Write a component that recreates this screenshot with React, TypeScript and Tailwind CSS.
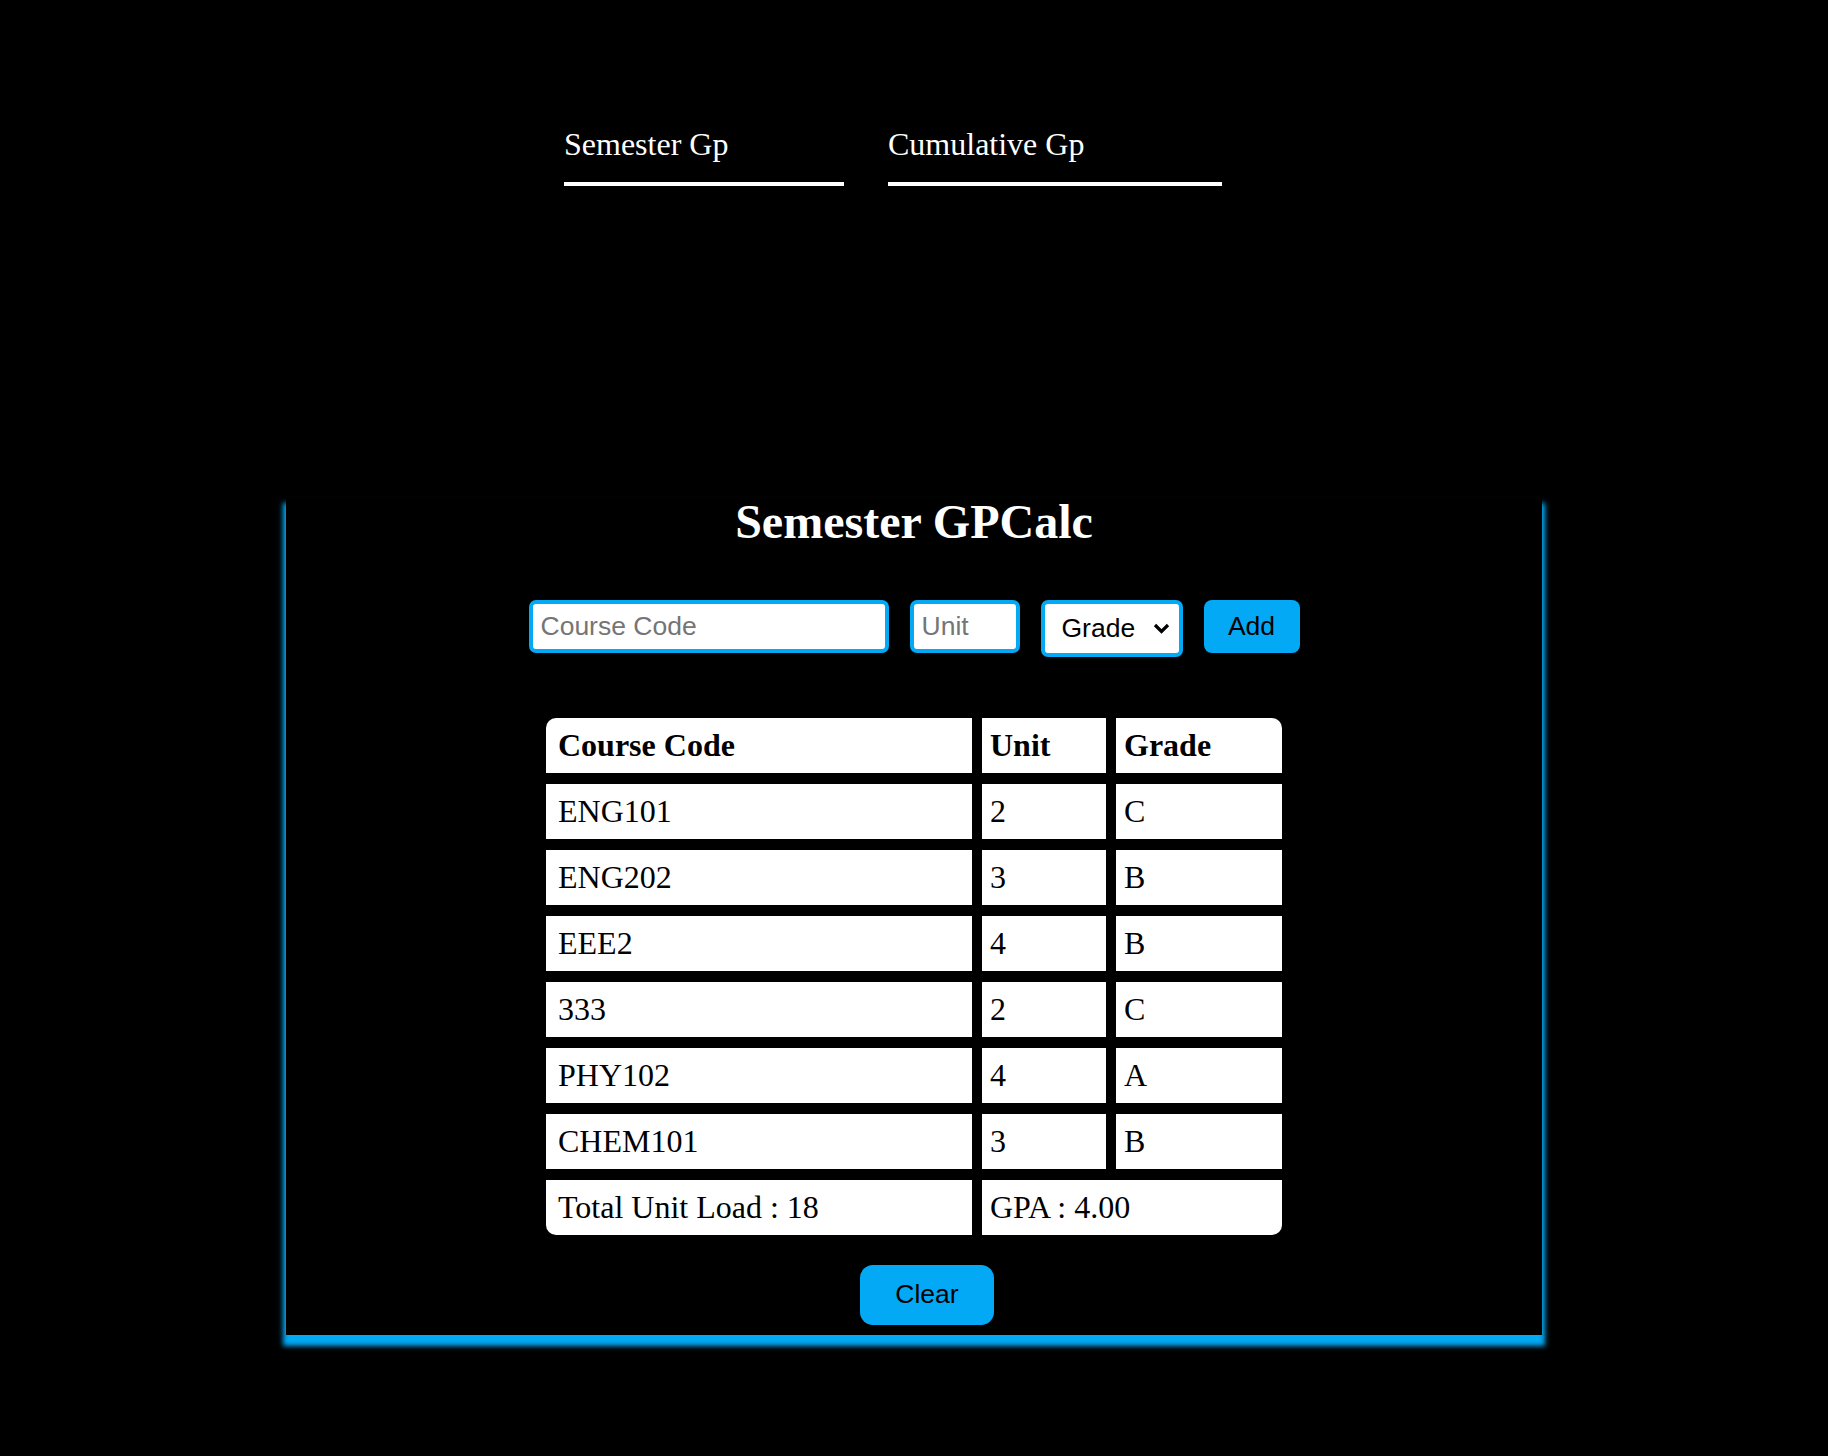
import { useState } from "react";

type Course = { code: string; unit: number; grade: string };

const initialCourses: Course[] = [
    { code: "ENG101", unit: 2, grade: "C" },
    { code: "ENG202", unit: 3, grade: "B" },
    { code: "EEE2", unit: 4, grade: "B" },
    { code: "333", unit: 2, grade: "C" },
    { code: "PHY102", unit: 4, grade: "A" },
    { code: "CHEM101", unit: 3, grade: "B" },
];

const App = () => {
    const [tab, setTab] = useState<"semester" | "cumulative">("semester");
    const [courses, setCourses] = useState<Course[]>(initialCourses);
    const [code, setCode] = useState("");
    const [unit, setUnit] = useState("");
    const [grade, setGrade] = useState("");

    const totalUnits = courses.reduce((sum, c) => sum + c.unit, 0);

    const addCourse = () => {
        if (!code || !unit || !grade) return;
        setCourses([...courses, { code, unit: Number(unit), grade }]);
        setCode("");
        setUnit("");
        setGrade("");
    };

    return (
        <div className="min-h-screen bg-black font-['Liberation_Serif',serif] text-white">
            <nav className="flex pl-[564px] pt-[126px] gap-[44px]">
                <button
                    onClick={() => setTab("semester")}
                    className="w-[280px] text-left text-[32px] leading-[37px] pb-[19px] border-b-4 border-white"
                >
                    Semester Gp
                </button>
                <button
                    onClick={() => setTab("cumulative")}
                    className="w-[334px] text-left text-[32px] leading-[37px] pb-[19px] border-b-4 border-white"
                >
                    Cumulative Gp
                </button>
            </nav>

            <section
                data-tab={tab}
                className="w-[1256px] mx-auto mt-[312px] bg-black pb-[10px] flex flex-col items-center shadow-[0_8px_5px_3px_#03a9f4]"
            >
                <h1 className="text-[48px] leading-[48px] font-bold">Semester GPCalc</h1>

                <div className="flex items-start gap-[21px] mt-[54px] font-['Liberation_Sans',sans-serif] text-[26.5px]">
                    <input
                        value={code}
                        onChange={(e) => setCode(e.target.value)}
                        placeholder="Course Code"
                        className="w-[360px] h-[53px] px-2 bg-white text-black border-4 border-[#03a9f4] rounded-[7px] outline-none placeholder:text-[#757575]"
                    />
                    <input
                        value={unit}
                        onChange={(e) => setUnit(e.target.value)}
                        placeholder="Unit"
                        className="w-[110px] h-[53px] px-2 bg-white text-black border-4 border-[#03a9f4] rounded-[7px] outline-none placeholder:text-[#757575]"
                    />
                    <div className="relative">
                        <select
                            value={grade}
                            onChange={(e) => setGrade(e.target.value)}
                            className="appearance-none w-[142px] h-[57px] pl-[17px] bg-white text-black border-4 border-[#03a9f4] rounded-[7px] outline-none"
                        >
                            <option value="">Grade</option>
                            <option value="A">A</option>
                            <option value="B">B</option>
                            <option value="C">C</option>
                            <option value="D">D</option>
                            <option value="E">E</option>
                            <option value="F">F</option>
                        </select>
                        <svg
                            className="absolute right-[13px] top-[23px] pointer-events-none"
                            width="17"
                            height="11"
                            viewBox="0 0 17 11"
                        >
                            <path d="M2 2 L8.5 8.5 L15 2" fill="none" stroke="black" strokeWidth="3.2" />
                        </svg>
                    </div>
                    <button
                        onClick={addCourse}
                        className="w-[96px] h-[53px] bg-[#03a9f4] text-black rounded-[8px]"
                    >
                        Add
                    </button>
                </div>

                <table className="table-fixed w-[756px] mt-[50px] border-separate border-spacing-x-[10px] border-spacing-y-[11px] text-black text-[32px] leading-[37px]">
                    <thead>
                        <tr>
                            <th className="w-[426px] h-[55px] bg-white text-left font-bold pl-3 rounded-tl-[10px]">Course Code</th>
                            <th className="w-[124px] h-[55px] bg-white text-left font-bold pl-2">Unit</th>
                            <th className="w-[166px] h-[55px] bg-white text-left font-bold pl-2 rounded-tr-[10px]">Grade</th>
                        </tr>
                    </thead>
                    <tbody>
                        {courses.map((c, i) => (
                            <tr key={i}>
                                <td className="h-[55px] bg-white pl-3">{c.code}</td>
                                <td className="h-[55px] bg-white pl-2">{c.unit}</td>
                                <td className="h-[55px] bg-white pl-2">{c.grade}</td>
                            </tr>
                        ))}
                        <tr>
                            <td className="h-[55px] bg-white pl-3 rounded-bl-[10px]">Total Unit Load : {totalUnits}</td>
                            <td colSpan={2} className="h-[55px] bg-white pl-2 rounded-br-[10px]">GPA : 4.00</td>
                        </tr>
                    </tbody>
                </table>

                <button
                    onClick={() => setCourses([])}
                    className="mt-[19px] ml-[26px] w-[134px] h-[60px] bg-[#03a9f4] text-black rounded-[13px] font-['Liberation_Sans',sans-serif] text-[26.5px]"
                >
                    Clear
                </button>
            </section>
        </div>
    );
};

export default App;
